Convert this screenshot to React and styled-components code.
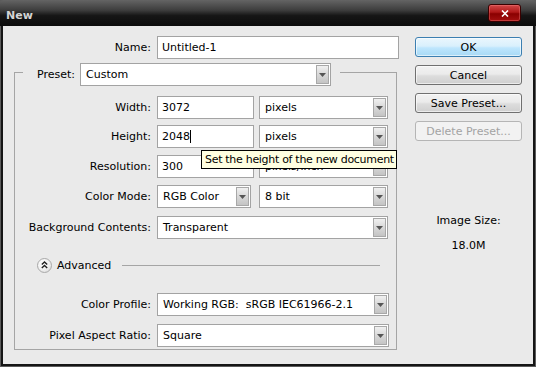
import React from 'react';
import styled, { createGlobalStyle } from 'styled-components';

const GlobalStyle = createGlobalStyle`
  html, body {
    margin: 0;
    padding: 0;
    overflow: hidden;
    background: #111;
  }
  body {
    font-family: "DejaVu Sans", "Liberation Sans", sans-serif;
    font-size: 11px;
    color: #000;
  }
`;

const Frame = styled.div`
  width: 536px;
  height: 367px;
  box-sizing: border-box;
  display: flex;
  flex-direction: column;
  background: #151515;
  box-shadow: inset 0 0 0 1px #5c5c5c;
`;

const TitleBar = styled.div`
  height: 26px;
  flex: none;
  display: flex;
  align-items: center;
  justify-content: space-between;
  padding: 0 15px 0 6px;
  background: linear-gradient(#646464 0%, #3c3c3c 40%, #161616 60%, #0c0c0c 100%);
  border-radius: 4px 4px 0 0;
`;

const Title = styled.span`
  padding-top: 4px;
  font-weight: bold;
  font-size: 11px;
  color: #d4d4d4;
`;

const CloseButton = styled.div`
  width: 33px;
  height: 18px;
  box-sizing: border-box;
  display: flex;
  align-items: center;
  justify-content: center;
  border: 1px solid #3a0000;
  border-radius: 3px;
  background: linear-gradient(#d24a4a 0%, #b01818 45%, #8a0000 55%, #a31010 100%);
  box-shadow: inset 0 0 0 1px rgba(255, 140, 140, 0.35);
`;

const Client = styled.div`
  flex: 1;
  margin: 0 3px 3px;
  background: #eaeaea;
  display: flex;
  position: relative;
`;

const FormColumn = styled.div`
  width: 386px;
  margin-left: 11px;
  padding-top: 10px;
`;

const ButtonColumn = styled.div`
  width: 107px;
  margin-left: 15px;
  padding-top: 11px;
  display: flex;
  flex-direction: column;
  gap: 8px;
`;

const Row = styled.div`
  display: flex;
  align-items: center;
  gap: 6px;
  height: 23px;
  margin-top: ${(p) => p.$top ?? 7}px;
`;

const Label = styled.div`
  width: ${(p) => p.$width ?? 136}px;
  text-align: right;
  white-space: nowrap;
`;

const Controls = styled.div`
  display: flex;
  gap: 5px;
  height: 100%;
`;

const Cell = styled.div`
  width: 97px;
  height: 100%;
  position: relative;
`;

const Field = styled.div`
  width: ${(p) => p.$width ?? 97}px;
  height: 100%;
  box-sizing: border-box;
  border: 1px solid #a3a3a3;
  background: #fff;
  padding: 0 4px;
  display: flex;
  align-items: center;
  white-space: pre;
`;

const Caret = styled.span`
  display: inline-block;
  width: 1px;
  height: 13px;
  background: #000;
`;

const SelectBox = styled(Field)`
  position: relative;
  padding: 0 18px 0 5px;
`;

const Arrow = styled.div`
  position: absolute;
  top: 1px;
  right: 1px;
  bottom: 1px;
  width: 13px;
  box-sizing: border-box;
  border: 1px solid #a8a8a8;
  background: linear-gradient(#f0f0f0 0%, #d8d8d8 50%, #c4c4c4 100%);
  display: flex;
  align-items: center;
  justify-content: center;
`;

const Group = styled.fieldset`
  width: 383px;
  box-sizing: border-box;
  margin: 0;
  padding: 0 0 2px;
  border: 1px solid #a5a5a5;
`;

const Legend = styled.legend`
  display: flex;
  align-items: center;
  gap: 5px;
  margin-left: 8px;
  padding: 4px 9px 0 14px;
  height: 27px;
  box-sizing: border-box;
`;

const LegendLabel = styled.span`
  width: 38px;
  white-space: nowrap;
`;

const GroupBody = styled.div`
  padding-top: 3px;
`;

const AdvancedRow = styled.div`
  display: flex;
  align-items: center;
  height: 16px;
  margin-top: 18px;
  padding-left: 22px;
  gap: 5px;
`;

const Disclosure = styled.div`
  width: 15px;
  height: 15px;
  box-sizing: border-box;
  border-radius: 50%;
  border: 1px solid #a9a9a9;
  background: radial-gradient(circle at 40% 35%, #ffffff 0%, #f2f2f2 50%, #d2d2d2 100%);
  display: flex;
  align-items: center;
  justify-content: center;
`;

const Rule = styled.div`
  flex: 1;
  height: 0;
  border-top: 1px solid #a5a5a5;
  margin: 0 16px 0 6px;
`;

const Button = styled.div`
  height: 20px;
  box-sizing: border-box;
  border-radius: 3px;
  display: flex;
  align-items: center;
  justify-content: center;
  border: 1px solid ${(p) => (p.$variant === 'primary' ? '#3c7fb1' : p.$variant === 'disabled' ? '#b5b5b5' : '#707070')};
  color: ${(p) => (p.$variant === 'disabled' ? '#a3a3a3' : '#000')};
  background: ${(p) =>
    p.$variant === 'primary'
      ? 'linear-gradient(#eaf6fd 0%, #d9f0fc 45%, #bee6fd 55%, #a7d9f5 100%)'
      : p.$variant === 'disabled'
      ? '#f2f2f2'
      : 'linear-gradient(#f2f2f2 0%, #ebebeb 45%, #dddddd 55%, #cfcfcf 100%)'};
  box-shadow: inset 0 0 0 1px ${(p) => (p.$variant === 'disabled' ? 'transparent' : 'rgba(255,255,255,0.6)')};
`;

const SizeInfo = styled.div`
  margin-top: 65px;
  text-align: center;
  line-height: 13px;
`;

const SizeValue = styled.div`
  margin-top: 12px;
`;

const Tooltip = styled.div`
  position: absolute;
  top: 25px;
  left: 44px;
  z-index: 2;
  width: 196px;
  height: 19px;
  box-sizing: border-box;
  border: 1px solid #000;
  background: #ffffe1;
  padding: 0 3px;
  line-height: 17px;
  white-space: nowrap;
  letter-spacing: -0.3px;
  overflow: hidden;
`;

const ArrowIcon = () => (
  <svg width="7" height="4" viewBox="0 0 7 4">
    <polygon points="0,0 7,0 3.5,4" fill="#555" />
  </svg>
);

const Select = ({ value, width }) => (
  <SelectBox $width={width}>
    {value}
    <Arrow>
      <ArrowIcon />
    </Arrow>
  </SelectBox>
);

const App = () => (
  <>
    <GlobalStyle />
    <Frame>
      <TitleBar>
        <Title>New</Title>
        <CloseButton>
          <svg width="8" height="7" viewBox="0 0 8 7">
            <path d="M1 0.5 L7 6.5 M7 0.5 L1 6.5" stroke="#fff" strokeWidth="1.6" />
          </svg>
        </CloseButton>
      </TitleBar>
      <Client>
        <FormColumn>
          <Row $top={0}>
            <Label $width={137}>Name:</Label>
            <Field $width={242}>Untitled-1</Field>
          </Row>
          <Group>
            <Legend>
              <LegendLabel>Preset:</LegendLabel>
              <Select value="Custom" width={251} />
            </Legend>
            <GroupBody>
              <Row $top={7}>
                <Label>Width:</Label>
                <Controls>
                  <Cell>
                    <Field>3072</Field>
                  </Cell>
                  <Select value="pixels" width={129} />
                </Controls>
              </Row>
              <Row $top={6}>
                <Label>Height:</Label>
                <Controls>
                  <Cell>
                    <Field>
                      2048
                      <Caret />
                    </Field>
                    <Tooltip>Set the height of the new document</Tooltip>
                  </Cell>
                  <Select value="pixels" width={129} />
                </Controls>
              </Row>
              <Row>
                <Label>Resolution:</Label>
                <Controls>
                  <Cell>
                    <Field>300</Field>
                  </Cell>
                  <Select value="pixels/inch" width={129} />
                </Controls>
              </Row>
              <Row>
                <Label>Color Mode:</Label>
                <Controls>
                  <Cell>
                    <Select value="RGB Color" width={94} />
                  </Cell>
                  <Select value="8 bit" width={129} />
                </Controls>
              </Row>
              <Row $top={8}>
                <Label>Background Contents:</Label>
                <Select value="Transparent" width={231} />
              </Row>
              <AdvancedRow>
                <Disclosure>
                  <svg width="7" height="8" viewBox="0 0 7 8">
                    <path d="M0.8 3.6 L3.5 1 L6.2 3.6 M0.8 7 L3.5 4.4 L6.2 7" stroke="#222" strokeWidth="1.4" fill="none" />
                  </svg>
                </Disclosure>
                <span>Advanced</span>
                <Rule />
              </AdvancedRow>
              <Row $top={20}>
                <Label>Color Profile:</Label>
                <Select value="Working RGB:  sRGB IEC61966-2.1" width={232} />
              </Row>
              <Row $top={8}>
                <Label>Pixel Aspect Ratio:</Label>
                <Select value="Square" width={232} />
              </Row>
            </GroupBody>
          </Group>
        </FormColumn>
        <ButtonColumn>
          <Button $variant="primary">OK</Button>
          <Button>Cancel</Button>
          <Button>Save Preset...</Button>
          <Button $variant="disabled">Delete Preset...</Button>
          <SizeInfo>
            <div>Image Size:</div>
            <SizeValue>18.0M</SizeValue>
          </SizeInfo>
        </ButtonColumn>
      </Client>
    </Frame>
  </>
);

export default App;
